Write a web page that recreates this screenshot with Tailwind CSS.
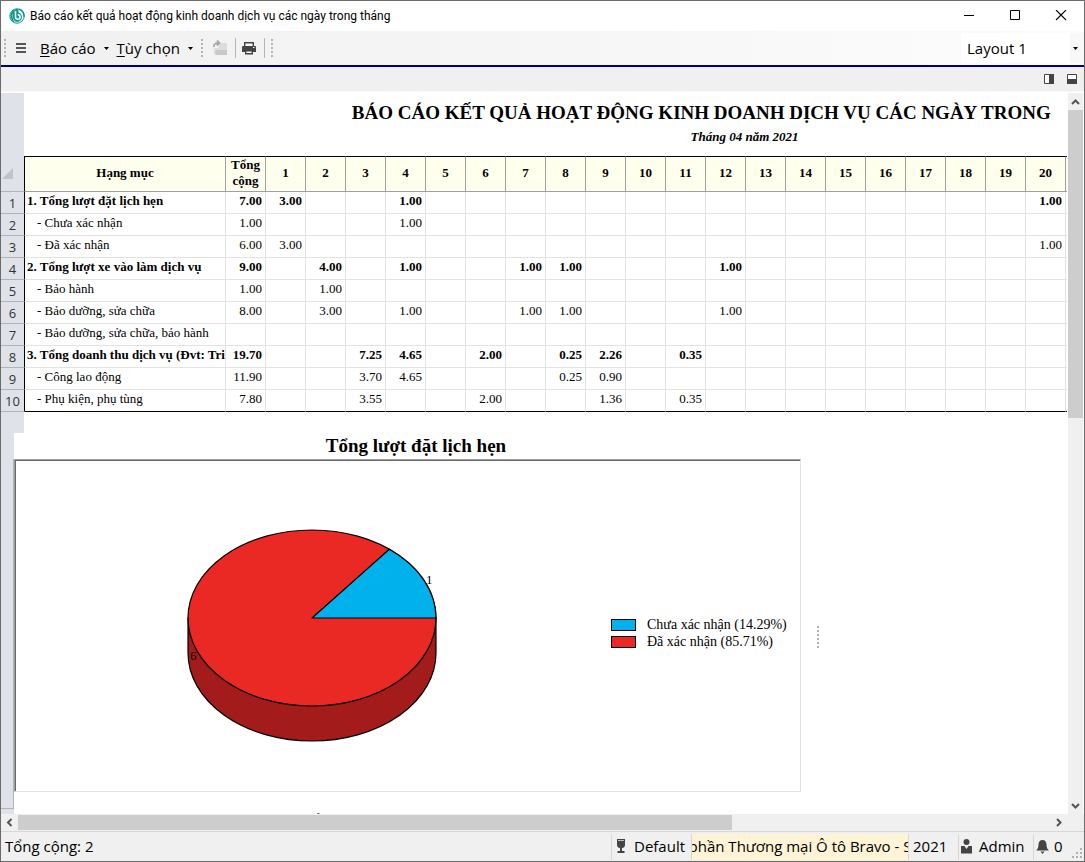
<!DOCTYPE html>
<html lang="vi">
<head>
<meta charset="utf-8">
<title>Báo cáo kết quả hoạt động kinh doanh dịch vụ các ngày trong tháng</title>
<script src="https://cdn.jsdelivr.net/npm/@tailwindcss/browser@4"></script>
</head>
<body class="flex h-screen flex-col overflow-hidden border border-[#6b6b6b] bg-white font-['Open_Sans','Noto_Sans',sans-serif] text-black">

<header class="flex h-[30px] shrink-0 items-center pl-2">
  <svg class="size-4 shrink-0" viewBox="0 0 16 16" aria-hidden="true">
    <circle cx="8" cy="8" r="7.200" fill="#fff" stroke="#0e9a8c" stroke-width="1"/>
    <path d="M5.500 1.500A7 7 0 0 0 3 12.500C3.500 13.500 5 14.500 6 14.700 3.500 12 3.500 9 3.700 6z" fill="#0e9a8c"/>
    <path d="M7 1h2.500v3.500A5 5 0 0 1 13 9a5 5 0 0 1-5 5A5 5 0 0 1 4 9.500V3z" fill="#0e9a8c"/>
    <path d="M6.500 3v6a2.300 2.300 0 1 0 2.300-2.300" fill="none" stroke="#fff" stroke-width="1.500"/>
    <path d="M10 1.300c3.500 1 5.200 4 5 7.500" fill="none" stroke="#0e9a8c" stroke-width="1.500"/>
  </svg>
  <h1 class="ml-[5px] flex-1 whitespace-nowrap font-['Roboto','Open_Sans',sans-serif] text-xs">Báo cáo kết quả hoạt động kinh doanh dịch vụ các ngày trong tháng</h1>
  <button class="flex w-[46px] justify-center" aria-label="Thu nhỏ"><svg class="size-3" viewBox="0 0 12 12"><path d="M1 5.500h10" stroke="#000"/></svg></button>
  <button class="flex w-[46px] justify-center" aria-label="Phóng to"><svg class="size-3" viewBox="0 0 12 12"><path d="M1.500.500h9v9h-9z" fill="none" stroke="#000"/></svg></button>
  <button class="flex w-[46px] justify-center" aria-label="Đóng"><svg class="size-3" viewBox="0 0 12 12"><path d="M1 0l10 10M11 0L1 10" stroke="#000" stroke-width="1.100"/></svg></button>
</header>

<nav class="flex h-9 shrink-0 items-center border-b-2 border-[#00007f] bg-linear-to-r from-[#f0f0f0] to-[#fcfcfc] text-[15px]">
  <svg class="ml-[3px] h-5 w-[3px]" viewBox="0 0 3 20"><path d="M1 1v20" stroke="#b4b4b4" stroke-width="2" stroke-dasharray="2 2"/></svg>
  <button class="ml-[9px] flex size-3 items-center" aria-label="Menu"><svg class="size-3" viewBox="0 0 12 12"><path d="M0 2h10M0 6h10M0 10h10" stroke="#555" stroke-width="2"/></svg></button>
  <button class="ml-3 flex items-center gap-2"><span><u class="underline-offset-2">B</u>áo cáo</span><svg class="h-[3px] w-[5px]" viewBox="0 0 5 3"><path d="M0 0h5L2.500 3z"/></svg></button>
  <button class="ml-2 flex items-center gap-2"><span><u class="underline-offset-2">T</u>ùy chọn</span><svg class="h-[3px] w-[5px]" viewBox="0 0 5 3"><path d="M0 0h5L2.500 3z"/></svg></button>
  <svg class="ml-2 h-5 w-[3px]" viewBox="0 0 3 20"><path d="M1 1v20" stroke="#b4b4b4" stroke-width="2" stroke-dasharray="2 2"/></svg>
  <button class="ml-2 flex" disabled aria-label="Mở"><svg class="size-4" viewBox="0 0 16 16">
    <path d="M2 8h4l2-5h7v11H2z" fill="#dcdcdc"/><path d="M4 10h11v5H4l-1-1z" fill="#c8c8c8"/>
    <path d="M2 7C1.500 4 3.500 3 7 3M5 .500L7.500 3 5 5.500" fill="none" stroke="#a8a8a8" stroke-width="1.800"/></svg></button>
  <span class="ml-[7px] h-5 w-px bg-[#b4b4b4]"></span>
  <button class="ml-[5px] flex" aria-label="In"><svg class="size-4" viewBox="0 0 16 16">
    <path d="M3.700 6V2.700h8.600V6" fill="#fff" stroke="#444" stroke-width="1.400"/>
    <path d="M2 6h12a1 1 0 0 1 1 1v5h-3v-2H4v2H1V7a1 1 0 0 1 1-1z" fill="#444"/>
    <path d="M4.700 10.700h6.600v3H4.700z" fill="#fff" stroke="#444" stroke-width="1.400"/><path d="M12 7.500h1.500" stroke="#fff"/></svg></button>
  <span class="ml-[7px] h-5 w-px bg-[#b4b4b4]"></span>
  <svg class="ml-[6px] h-5 w-[3px]" viewBox="0 0 3 20"><path d="M1 1v20" stroke="#b4b4b4" stroke-width="2" stroke-dasharray="2 2"/></svg>
  <label class="ml-auto flex h-[30px] w-[123px] items-center bg-[#f8f8f8]">
    <select class="h-full w-[109px] appearance-none bg-white pl-[6px] text-[15px]" aria-label="Layout"><option>Layout 1</option></select>
    <svg class="ml-[3px] h-[3px] w-[5px]" viewBox="0 0 5 3"><path d="M0 0h5L2.500 3z"/></svg>
  </label>
</nav>

<div class="flex h-[25px] shrink-0 items-center justify-end gap-[13px] border-b border-[#f8f8f8] bg-[#f0f0f0] pr-[7px]">
  <button class="flex" aria-label="Khung phải"><svg class="h-[10px] w-[10px]" viewBox="0 0 10 10"><path d="M.500.500h9v9h-9z" fill="#fff" stroke="#444"/><path d="M5 0h5v10H5z" fill="#444"/></svg></button>
  <button class="flex" aria-label="Khung dưới"><svg class="h-[10px] w-[10px]" viewBox="0 0 10 10"><path d="M.500.500h9v9h-9z" fill="#fff" stroke="#444"/><path d="M0 5h10v5H0z" fill="#444"/></svg></button>
</div>

<div class="flex min-h-0 flex-1 pt-px">
  <main class="flex min-w-0 flex-1 flex-col overflow-hidden font-['Liberation_Serif',serif]">
    <div class="flex h-[63px] shrink-0">
      <div class="w-[23px] shrink-0 bg-[#dfe2e8]"></div>
      <div class="w-[1441px] shrink-0 pt-2 text-center">
        <h2 class="text-[19px] leading-6 font-bold whitespace-nowrap">BÁO CÁO KẾT QUẢ HOẠT ĐỘNG KINH DOANH DỊCH VỤ CÁC NGÀY TRONG <span class="ml-3">THÁNG</span></h2>
        <p class="text-[13px] leading-6 font-bold italic">Tháng 04 năm 2021</p>
      </div>
    </div>
    <table class="w-[1105px] shrink-0 table-fixed border-separate border-spacing-0 text-[13px]">
      <colgroup id="cols"><col class="w-6"><col class="w-[201px]"></colgroup>
      <thead><tr id="head" class="h-9 bg-[#ffffee]">
        <th class="border-r border-b border-r-black border-b-[#b0b3b8] bg-[#dfe2e8] p-0"><svg class="ml-px size-[11px]" viewBox="0 0 11 11"><path d="M11 0v11H0z" fill="#c0c3c8"/></svg></th>
      </tr></thead>
      <tbody id="rows"></tbody>
    </table>
    <div class="h-[21px] w-[23px] shrink-0 bg-[#dfe2e8]"></div>
    <div class="flex min-h-0 flex-1">
      <div class="flex w-[13px] shrink-0 flex-col bg-[#dfe2e8] pt-[26px] pb-[5px]"><div class="flex-1 border-r border-b border-[#b0b3b8]"></div></div>
      <div class="w-[804px] shrink-0">
        <h3 class="h-[26px] text-center text-[19px] leading-[26px] font-bold">Tổng lượt đặt lịch hẹn</h3>
        <div class="flex items-center">
          <figure class="flex h-[333px] w-[787px] shrink-0 items-center border border-t-[#a0a0a0] border-r-[#e3e3e3] border-b-[#e3e3e3] border-l-[#a0a0a0]">
            <div class="flex h-full w-full items-center border-t border-l border-[#696969]">
              <svg class="mt-[18px] ml-[170px] h-[214px] w-[252px] shrink-0" viewBox="0 0 252 214" role="img" aria-label="Tổng lượt đặt lịch hẹn">
                <g stroke="#000" stroke-width="1.200" stroke-linejoin="round">
                  <path d="M2 90v35a124 88 0 0 0 248 0V90z" fill="#a31b1a"/>
                  <ellipse cx="126" cy="90" rx="124" ry="88" fill="#ea2925"/>
                  <path d="M126 90h124a124 88 0 0 0-46.700-68.800z" fill="#00b1ec"/>
                </g>
                <text x="240" y="56" font-size="13">1</text>
                <text x="4" y="132" font-size="13">6</text>
              </svg>
              <ul class="mt-[14px] ml-[173px] text-sm leading-[17px] whitespace-nowrap">
                <li class="flex items-center gap-[11px]"><span class="h-3 w-[25px] border border-black bg-[#00b1ec]"></span>Chưa xác nhận (14.29%)</li>
                <li class="flex items-center gap-[11px]"><span class="h-3 w-[25px] border border-black bg-[#ea2925]"></span>Đã xác nhận (85.71%)</li>
              </ul>
            </div>
          </figure>
          <svg class="mt-[22px] ml-4 h-[22px] w-[2px] shrink-0" viewBox="0 0 2 22"><path d="M1 0v22" stroke="#b0b0b0" stroke-width="2" stroke-dasharray="2 2"/></svg>
        </div>
        <h3 class="mt-4 text-center text-[19px] leading-[26px] font-bold">Tổng lượt xe vào làm dịch vụ</h3>
      </div>
    </div>
  </main>
  <div class="flex w-[17px] shrink-0 flex-col items-center border-r border-l border-white bg-[#f0f0f0]">
    <svg class="h-[17px] w-[9px]" viewBox="0 0 9 17"><path d="M1 11l3.500-3.500L8 11" fill="none" stroke="#555" stroke-width="2"/></svg>
    <div class="h-[308px] w-full bg-[#cdcdcd]"></div>
    <svg class="mt-auto h-[17px] w-[9px]" viewBox="0 0 9 17"><path d="M1 7l3.500 3.500L8 7" fill="none" stroke="#555" stroke-width="2"/></svg>
  </div>
</div>

<div class="flex h-[17px] shrink-0 items-stretch border-t border-b border-[#f0f0f0] bg-[#f0f0f0] pr-[17px]">
  <svg class="h-full w-[17px]" viewBox="0 0 17 15"><path d="M10.500 4L7 7.500l3.500 3.500" fill="none" stroke="#555" stroke-width="2"/></svg>
  <div class="w-[67%] bg-[#cdcdcd]"></div>
  <svg class="ml-auto h-full w-[17px]" viewBox="0 0 17 15"><path d="M7 4l3.500 3.500L7 11" fill="none" stroke="#555" stroke-width="2"/></svg>
</div>

<footer class="flex h-[30px] shrink-0 items-center border-t border-[#d7d7d7] bg-[#f0f0f0] text-[15px] whitespace-nowrap">
  <span class="ml-1 flex-1">Tổng cộng: 2</span>
  <div class="flex h-[26px] w-[80px] items-center border-l border-[#d7d7d7]">
    <svg class="ml-[4px] h-[15px] w-[10px]" viewBox="0 0 10 15"><path d="M1 0h8v6c0 2-1.500 3-3 3v3h2.500v2h-7v-2H4V9C2.500 9 1 8 1 6z" fill="#444"/><path d="M2 1.500h6" stroke="#bbb"/></svg>
    <span class="ml-2">Default</span>
  </div>
  <div class="flex h-[26px] w-[217px] items-center justify-center overflow-hidden border-l border-[#d7d7d7] bg-[#fff4d6]"><span>phần Thương mại Ô tô Bravo - S</span></div>
  <span class="flex h-[26px] w-[50px] items-center border-l border-[#d7d7d7] pl-1">2021</span>
  <div class="flex h-[26px] w-[75px] items-center gap-[7px] border-l border-[#d7d7d7] pl-[2px]">
    <svg class="h-[15px] w-[11px]" viewBox="0 0 11 15"><circle cx="5.500" cy="3" r="3" fill="#444"/><path d="M0 7h3.500l2 3 2-3H11v7.500H0z" fill="#444"/></svg>Admin
  </div>
  <div class="flex h-[26px] w-[51px] items-center gap-[5px] border-l border-[#d7d7d7] pl-[2px]">
    <svg class="h-[14px] w-[13px]" viewBox="0 0 13 14"><path d="M6.500 0C4 0 2.500 2 2.500 4.500 2.500 8 1.500 9 0 10.500h13C11.500 9 10.500 8 10.500 4.500 10.500 2 9 0 6.500 0zM4.500 11.500h4L6.500 14z" fill="#444"/></svg>0
    <svg class="mt-auto ml-auto size-[12px]" viewBox="0 0 12 12"><path d="M8 0h2v2H8zM4 4h2v2H4zM8 4h2v2H8zM0 8h2v2H0zM4 8h2v2H4zM8 8h2v2H8z" fill="#b0b0b0"/></svg>
  </div>
</footer>

<script>
const DAYS = 21;
const rows = [
  ['1. Tổng lượt đặt lịch hẹn', true, '7.00', {1:'3.00', 4:'1.00', 20:'1.00'}],
  ['- Chưa xác nhận', false, '1.00', {4:'1.00'}],
  ['- Đã xác nhận', false, '6.00', {1:'3.00', 20:'1.00'}],
  ['2. Tổng lượt xe vào làm dịch vụ', true, '9.00', {2:'4.00', 4:'1.00', 7:'1.00', 8:'1.00', 12:'1.00'}],
  ['- Bảo hành', false, '1.00', {2:'1.00'}],
  ['- Bảo dưỡng, sửa chữa', false, '8.00', {2:'3.00', 4:'1.00', 7:'1.00', 8:'1.00', 12:'1.00'}],
  ['- Bảo dưỡng, sửa chữa, bảo hành', false, '', {}],
  ['3. Tổng doanh thu dịch vụ (Đvt: Tri', true, '19.70', {3:'7.25', 4:'4.65', 6:'2.00', 8:'0.25', 9:'2.26', 11:'0.35'}],
  ['- Công lao động', false, '11.90', {3:'3.70', 4:'4.65', 8:'0.25', 9:'0.90'}],
  ['- Phụ kiện, phụ tùng', false, '7.80', {3:'3.55', 6:'2.00', 9:'1.36', 11:'0.35'}],
];
const headCell = 'border-t border-r border-b border-t-black border-r-[#a0a0a0] border-b-[#a0a0a0] p-0 pb-[2px] leading-4';
let head = `<th class="${headCell}">Hạng mục</th><th class="${headCell}">Tổng cộng</th>`;
let cols = '<col class="w-10">';
for (let d = 1; d <= DAYS; d++) {
  head += `<th class="${headCell}">${d < DAYS ? d : ''}</th>`;
  cols += '<col class="w-10">';
}
document.getElementById('head').insertAdjacentHTML('beforeend', head);
document.getElementById('cols').insertAdjacentHTML('beforeend', cols);
document.getElementById('rows').innerHTML = rows.map(([name, bold, total, days], i) => {
  const edge = i === rows.length - 1 ? 'border-b-black' : 'border-b-[#e3e3e3]';
  const cell = 'border-r border-b border-r-[#e3e3e3] p-0 pr-[3px] pb-1 text-right leading-[17px] ' + edge;
  let html = `<th class="border-r border-b border-r-black border-b-[#b0b3b8] bg-[#dfe2e8] p-0 pt-px text-center font-['Open_Sans','Noto_Sans',sans-serif] leading-5 font-normal text-[#333]">${i + 1}</th>`;
  html += `<td class="overflow-hidden border-r border-b border-r-[#e3e3e3] p-0 pb-1 leading-[17px] whitespace-nowrap ${edge} ${bold ? 'pl-[2px]' : 'pl-3'}">${name}</td><td class="${cell}">${total}</td>`;
  for (let d = 1; d <= DAYS; d++) html += `<td class="${cell}">${days[d] || ''}</td>`;
  return `<tr class="h-[22px] ${bold ? 'font-bold' : ''}">${html}</tr>`;
}).join('');
</script>
</body>
</html>
